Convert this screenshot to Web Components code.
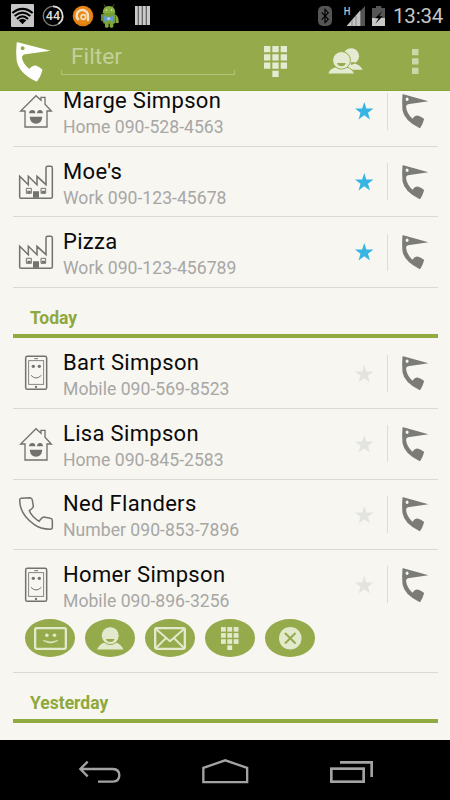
<!DOCTYPE html>
<html lang="en">
<head>
<meta charset="utf-8">
<title>Contacts</title>
<style>
  html, body { margin: 0; height: 100%; background: #000; }
  body { font-family: Roboto, "Noto Sans", sans-serif; overflow: hidden; }
</style>
</head>
<body>
<dialer-app></dialer-app>

<script>
const BIRD = '<path fill="currentColor" fill-rule="evenodd" d="M2 2Q2 0 5 1L104 26L34 36Q18 37 18 46Q19 62 40 81Q49 69 60 70Q71 74 80 83Q76 101 64 117Q61 119 57 116Q8 91 2 55Q-1 30 2 2ZM20 13a6 6 0 1 0 0 12a6 6 0 1 0 0-12Z"/>';
const CALL = '<path fill="currentColor" fill-rule="evenodd" d="M2 2Q2 0 5 1L104 25L30 35Q16 36 16 45Q18 66 41 86Q50 74 61 75Q74 77 87 87Q82 104 72 117Q69 119 65 116Q9 91 2 56Q-1 30 2 2ZM20 12a6 6 0 1 0 0 12a6 6 0 1 0 0-12Z"/>';

const keys = (w, h, dx, dy) => {
  let out = '';
  for (let r = 0; r < 4; r++)
    for (let c = 0; c < 3; c++)
      if (r < 3 || c === 1) out += `<rect x="${c * dx}" y="${r * dy}" width="${w}" height="${h}" fill="currentColor"/>`;
  return out;
};

// name: [viewBox, markup]
const ICONS = {
  wifi: ['0 0 69 69', `<rect width="69" height="69" rx="3" fill="#c6c6c6"/>
    <path d="M34.500 61L23 49Q34.500 40 46 49Z" fill="#000"/>
    <g fill="none" stroke="#000" stroke-width="6.500"><path d="M4 27Q34.500 2 65 27"/><path d="M11 36Q34.500 16 58 36"/><path d="M18 45Q34.500 29 51 45"/></g>`],
  ring: ['0 0 66 66', `<circle cx="33" cy="33" r="29" fill="none" stroke="#555" stroke-width="4"/>
    <path d="M33 4A29 29 0 0 1 49 57" fill="none" stroke="#ddd" stroke-width="5"/>
    <path d="M49 57A29 29 0 1 1 33 4" fill="none" stroke="#999" stroke-width="2"/>
    <text x="33" y="46" text-anchor="middle" font-size="38" font-weight="500" fill="#ddd">44</text>`],
  avast: ['0 0 66 66', `<circle cx="33" cy="33" r="31" fill="#dc7d12"/><circle cx="33" cy="31" r="27" fill="#e88718"/>
    <path d="M20 45A17 17 0 1 1 48 32V48" fill="none" stroke="#f5dfc1" stroke-width="7"/><circle cx="34" cy="36" r="7" fill="none" stroke="#f5dfc1" stroke-width="5"/>`],
  droid: ['0 0 54 72', `<g stroke="#6d9130" stroke-width="2"><path d="M14 10L9 1M34 10L39 1"/></g>
    <path d="M5 28Q5 6 24 6T43 28Z" fill="#86ad3c"/><circle cx="16" cy="18" r="2.500" fill="#e7efcf"/><circle cx="32" cy="18" r="2.500" fill="#e7efcf"/>
    <rect x="6" y="27" width="37" height="32" rx="5" fill="#769d30"/><rect x="12" y="50" width="11" height="21" rx="4" fill="#7fa737"/><rect x="26" y="50" width="11" height="21" rx="4" fill="#7fa737"/>
    <rect x="0" y="30" width="7" height="22" rx="3" fill="#688c28"/><path d="M43 31Q54 38 53 57L44 57Z" fill="#86ad3c"/>
    <path d="M8 33L23 41L38 33L36 54L23 48L10 55Z" fill="#6299cf"/><circle cx="23" cy="44" r="5" fill="#a9cbea"/>`],
  bars: ['0 0 45 57', `<rect width="45" height="57" fill="#666"/><path d="M0 0h8v57H0zM12 0h8v57h-8zM24 0h8v57h-8zM36 0h9v57h-9z" fill="#c9c9c9"/>`],
  bluetooth: ['0 0 42 60', `<rect width="42" height="60" rx="15" fill="#555"/>
    <path d="M11 19L31 40L21 50V10L31 20L11 41" fill="none" stroke="#000" stroke-width="3.500"/>`],
  signal: ['0 0 63 60', `<path d="M63 0V60H8Z" fill="#555"/><path d="M49 13V60H8Z" fill="#c4c4c4"/>
    <path d="M24 42V60M36 30V60" stroke="#888" stroke-width="3"/>
    <text x="-1" y="28" font-size="34" font-weight="500" textLength="20" lengthAdjust="spacingAndGlyphs" fill="#c4c4c4">H</text>`],
  battery: ['0 0 39 60', `<path d="M12 0H28V6H39V60H0V6H12Z" fill="#555"/><path d="M0 36H39V60H0Z" fill="#c9c9c9"/>
    <path d="M31 15L9 37H20L10 53L32 31H21Z" fill="#000"/>`],
  bird: ['0 0 104 118', BIRD],
  call: ['0 0 104 118', CALL],
  keypad: ['0 0 69 94', keys(19, 19, 25, 25)],
  people: ['0 0 106 80', `<g fill="currentColor"><circle cx="70" cy="25" r="24"/><path d="M50 67Q55 48 74 47Q97 49 105 67Z"/></g>
    <g fill="currentColor" stroke="#95aa4b" stroke-width="3"><path d="M-1 80Q5 57 39 56Q72 57 81 80Z"/><circle cx="41" cy="38" r="27"/></g>
    <path d="M27 46H54Q51 56 41 56T27 46Z" fill="#95aa4b"/><path d="M69 44H83Q80 51 70 52Z" fill="#95aa4b"/>`],
  more: ['0 0 19 76', `<path d="M0 0h19v19H0zM0 28h19v19H0zM0 57h19v19H0z" fill="currentColor"/>`],
  home: ['0 0 108 108', `<path d="M21 104V56H8L54 10L69 24V15H81V36L100 56H87V104Z" transform="translate(0 -2)" fill="none" stroke="currentColor" stroke-width="4"/>
    <path d="M33 61Q34 51 43 51T52 61ZM57 61Q58 51 66 51T75 61ZM35 71H73Q71 92 54 92T35 71Z" fill="currentColor"/>`],
  work: ['0 0 108 108', `<path d="M5 38V100Q5 104 9 104H98Q103 104 103 100V12Q103 8 98 8H89Q84 8 84 12V63L57 38V63L31 38V63Z" transform="translate(0 -1)" fill="none" stroke="currentColor" stroke-width="4.500"/>
    <path d="M25 73H40V88H25ZM69 73H83V88H69Z" fill="none" stroke="currentColor" stroke-width="3"/>
    <path d="M28 80H38V87H28ZM71 80H81V87H71ZM45 82H63V101H45Z" fill="currentColor"/>`],
  mobile: ['0 0 108 108', `<g fill="none" stroke="currentColor"><rect x="23" y="4" width="63" height="99" rx="5" stroke-width="4.500"/>
    <rect x="32" y="17" width="45" height="71" stroke-width="2.500"/><path d="M39 61Q54 77 70 61" stroke-width="3"/><path d="M49 11H60" stroke-width="3"/></g>
    <g fill="currentColor"><circle cx="46" cy="34" r="5"/><circle cx="64" cy="34" r="5"/><circle cx="54" cy="96" r="3.500"/></g>`],
  phone: ['0 0 108 108', `<path d="M10 7L36 5Q42 6 43 12L46 31Q45 36 34 44Q41 61 63 76Q72 64 77 63L97 67Q103 68 103 74V94Q103 100 97 100Q66 99 49 86Q5 55 5 12Q5 8 10 7Z" fill="none" stroke="currentColor" stroke-width="4.500"/>`],
  star: ['0 0 57 54', `<path d="M28.500 0L35 20H57L40 33L46 54L28.500 41L11 54L17 33L0 20H22Z" fill="currentColor"/>`],
  sms: ['0 0 100 70', `<rect x="3.500" y="3.500" width="93" height="63" rx="4" fill="none" stroke="currentColor" stroke-width="7"/>
    <circle cx="39" cy="25" r="5.500" fill="currentColor"/><circle cx="62" cy="25" r="5.500" fill="currentColor"/><path d="M28 41Q50 56 72 41Q52 50 28 41Z" fill="currentColor" stroke="currentColor" stroke-width="2"/>`],
  person: ['0 0 80 68', `<path d="M0 68Q9 50 24 47H56Q71 50 80 68Z" fill="currentColor"/><circle cx="40" cy="26" r="27" fill="currentColor" stroke="#95aa4b" stroke-width="3"/>
    <path d="M27 36H53Q51 45 40 45T27 36Z" fill="#95aa4b"/>`],
  mail: ['0 0 96 70', `<rect x="3.500" y="3.500" width="89" height="63" rx="4" fill="none" stroke="currentColor" stroke-width="7"/>
    <path d="M6 6L48 43L90 6M6 64L36 34M90 64L60 34" fill="none" stroke="currentColor" stroke-width="6"/>`],
  close: ['0 0 68 68', `<circle cx="34" cy="34" r="34" fill="currentColor"/><path d="M18 18L50 50M50 18L18 50" stroke="#95aa4b" stroke-width="6"/>`],
  back: ['0 0 126 66', `<path d="M3 24H102Q121 25 121 43T102 62H57M26 2L4 24L26 46" fill="none" stroke="#a3a3a3" stroke-width="7"/>`],
  homeNav: ['0 0 139 74', `<path d="M4 70V27L69.500 4L135 27V70Z" fill="none" stroke="#a3a3a3" stroke-width="7"/>`],
  recent: ['0 0 129 66', `<path d="M30 4H125V48" fill="none" stroke="#a3a3a3" stroke-width="8"/><rect x="4" y="23" width="97" height="39" fill="none" stroke="#a3a3a3" stroke-width="8"/>`]
};

customElements.define('ui-icon', class UiIcon extends HTMLElement {
  connectedCallback() {
    const [box, art] = ICONS[this.getAttribute('name')];
    this.attachShadow({mode: 'open'}).innerHTML = `
    <style>
      :host { display: block; flex: none; }
      svg { display: block; width: 100%; height: 100%; overflow: visible; }
    </style>
    <svg viewBox="${box}" preserveAspectRatio="none">${art}</svg>
    `;
  }
});

customElements.define('status-bar', class StatusBar extends HTMLElement {
  constructor() {
    super();
    this.attachShadow({mode: 'open'}).innerHTML = `
    <style>
      :host { display: flex; align-items: center; height: 31px; box-sizing: border-box; padding: 0 7px 0 11px; background: #000; }
      .left, .right { display: flex; align-items: center; }
      .left { flex: 1; }
      time { font-size: 20.5px; line-height: 31px; color: #c6c6c6; margin-left: 8px; padding-top: 1px; width: 50px; white-space: nowrap; letter-spacing: -0.2px; }
    </style>
    <div class="left">
      <ui-icon name="wifi" style="width:23px;height:23px"></ui-icon>
      <ui-icon name="ring" style="width:22px;height:22px;margin-left:8px"></ui-icon>
      <ui-icon name="avast" style="width:22px;height:22px;margin-left:8px"></ui-icon>
      <ui-icon name="droid" style="width:18px;height:24px;margin-left:7px"></ui-icon>
      <ui-icon name="bars" style="width:15px;height:19px;margin-left:16px"></ui-icon>
    </div>
    <div class="right">
      <ui-icon name="bluetooth" style="width:14px;height:20px"></ui-icon>
      <ui-icon name="signal" style="width:21px;height:20px;margin-left:12px"></ui-icon>
      <ui-icon name="battery" style="width:13px;height:20px;margin-left:7px"></ui-icon>
      <time>13:34</time>
    </div>
    `;
  }
});

customElements.define('action-bar', class ActionBar extends HTMLElement {
  constructor() {
    super();
    this.attachShadow({mode: 'open'}).innerHTML = `
    <style>
      :host { display: flex; align-items: flex-start; height: 60px; box-sizing: border-box; padding-left: 15.500px;
        background: #95aa4b; border-bottom: 1px solid #8aa436; color: #e5ebd3; }
      .filter { margin: 4px 0 0 11px; width: 174px; height: 40px; box-sizing: border-box; padding-left: 10px;
        font-size: 22.800px; line-height: 44px; color: #c4d09a;
        background: linear-gradient(#b3c27d, #b3c27d) 0 100% / 1px 5px no-repeat,
          linear-gradient(#b3c27d, #b3c27d) 100% 100% / 1px 5px no-repeat,
          linear-gradient(#b3c27d, #b3c27d) 0 100% / 100% 1px no-repeat; }
    </style>
    <ui-icon name="bird" style="width:34.500px;height:39.500px;margin-top:10.500px;color:#fff"></ui-icon>
    <div class="filter">Filter</div>
    <ui-icon name="keypad" style="width:23px;height:31px;margin:15px 0 0 28.500px"></ui-icon>
    <ui-icon name="people" style="width:35px;height:26px;margin:17px 0 0 41px"></ui-icon>
    <ui-icon name="more" style="width:6.500px;height:25px;margin:18px 0 0 49px;color:#ccd6a9"></ui-icon>
    `;
  }
});

customElements.define('contact-row', class ContactRow extends HTMLElement {
  connectedCallback() {
    const fav = this.hasAttribute('fav');
    this.attachShadow({mode: 'open'}).innerHTML = `
    <style>
      :host { display: block; box-sizing: border-box; height: var(--row-height, 70.450px); border-bottom: 1px solid #d9d9d6; }
      .row { display: flex; align-items: center; height: 69.400px; color: #7b7b77; }
      .kind { width: 36px; height: 36px; margin-left: 5px; color: #72726e; }
      .texts { flex: 1; margin-left: 9.500px; padding-top: 5px; white-space: nowrap; }
      .name { font-size: 22px; line-height: 27px; color: #0a0a0a; letter-spacing: 0.320px; }
      .number { font-size: 17.600px; line-height: 26px; color: #a7a7a5; letter-spacing: 0.020px; }
      .star { width: 18.500px; height: 17.500px; color: ${fav ? '#36b5e5' : '#e3e4e0'}; }
      .call { display: flex; align-items: center; height: 37px; margin-left: 13px; border-left: 1px solid #dcdcd9; padding: 0 9px 0 14.500px; }
      .call ui-icon { width: 26.500px; height: 34px; }
    </style>
    <div class="row">
      <ui-icon class="kind" name="${this.getAttribute('kind')}"></ui-icon>
      <div class="texts">
        <div class="name"><slot></slot></div>
        <div class="number"><slot name="number"></slot></div>
      </div>
      <ui-icon class="star" name="star"></ui-icon>
      <div class="call"><ui-icon name="call"></ui-icon></div>
    </div>
    <slot name="actions"></slot>
    `;
  }
});

customElements.define('section-title', class SectionTitle extends HTMLElement {
  constructor() {
    super();
    this.attachShadow({mode: 'open'}).innerHTML = `
    <style>
      :host { display: block; box-sizing: border-box; height: 50.500px; margin-bottom: 0.400px; padding: 16.500px 0 0 17.500px; border-bottom: 4px solid #92aa42;
        font-size: 17.500px; font-weight: 700; line-height: 28px; color: #8fa83b; }
    </style>
    <slot></slot>
    `;
  }
});

customElements.define('action-pills', class ActionPills extends HTMLElement {
  constructor() {
    super();
    this.attachShadow({mode: 'open'}).innerHTML = `
    <style>
      :host { display: flex; gap: 10px; padding-left: 12.500px; color: #e3e9cd; }
      .pill { display: flex; align-items: center; justify-content: center; width: 50px; height: 37.500px; border-radius: 50%; background: #95aa4b; }
    </style>
    <div class="pill"><ui-icon name="sms" style="width:33px;height:23px"></ui-icon></div>
    <div class="pill"><ui-icon name="person" style="width:26.500px;height:22.500px"></ui-icon></div>
    <div class="pill"><ui-icon name="mail" style="width:32px;height:23px"></ui-icon></div>
    <div class="pill"><ui-icon name="keypad" style="width:17.500px;height:23px"></ui-icon></div>
    <div class="pill"><ui-icon name="close" style="width:22.500px;height:22.500px"></ui-icon></div>
    `;
  }
});

customElements.define('nav-bar', class NavBar extends HTMLElement {
  constructor() {
    super();
    this.attachShadow({mode: 'open'}).innerHTML = `
    <style>
      :host { display: flex; align-items: flex-end; justify-content: space-between; height: 60px; box-sizing: border-box;
        padding: 0 77px 17px 79px; background: #000; }
    </style>
    <ui-icon name="back" style="width:42px;height:22px"></ui-icon>
    <ui-icon name="homeNav" style="width:46.500px;height:24.500px"></ui-icon>
    <ui-icon name="recent" style="width:43px;height:22px"></ui-icon>
    `;
  }
});

customElements.define('dialer-app', class DialerApp extends HTMLElement {
  constructor() {
    super();
    this.attachShadow({mode: 'open'}).innerHTML = `
    <style>
      :host { display: flex; flex-direction: column; width: 450px; height: 800px; }
      status-bar, action-bar, nav-bar { flex: none; }
      .list { flex: 1; min-height: 0; overflow: hidden; box-sizing: border-box; padding: 0 12.500px; background: #f7f6f1; }
      .list > :first-child { margin-top: -14.500px; }
      .open { --row-height: 122.500px; }
    </style>
    <status-bar></status-bar>
    <action-bar></action-bar>
    <div class="list">
      <contact-row kind="home" fav>Marge Simpson<span slot="number">Home 090-528-4563</span></contact-row>
      <contact-row kind="work" fav>Moe's<span slot="number">Work 090-123-45678</span></contact-row>
      <contact-row kind="work" fav>Pizza<span slot="number">Work 090-123-456789</span></contact-row>
      <section-title>Today</section-title>
      <contact-row kind="mobile">Bart Simpson<span slot="number">Mobile 090-569-8523</span></contact-row>
      <contact-row kind="home">Lisa Simpson<span slot="number">Home 090-845-2583</span></contact-row>
      <contact-row kind="phone">Ned Flanders<span slot="number">Number 090-853-7896</span></contact-row>
      <contact-row kind="mobile" class="open">Homer Simpson<span slot="number">Mobile 090-896-3256</span><action-pills slot="actions"></action-pills></contact-row>
      <section-title>Yesterday</section-title>
    </div>
    <nav-bar></nav-bar>
    `;
  }
});
</script>
</body>
</html>
